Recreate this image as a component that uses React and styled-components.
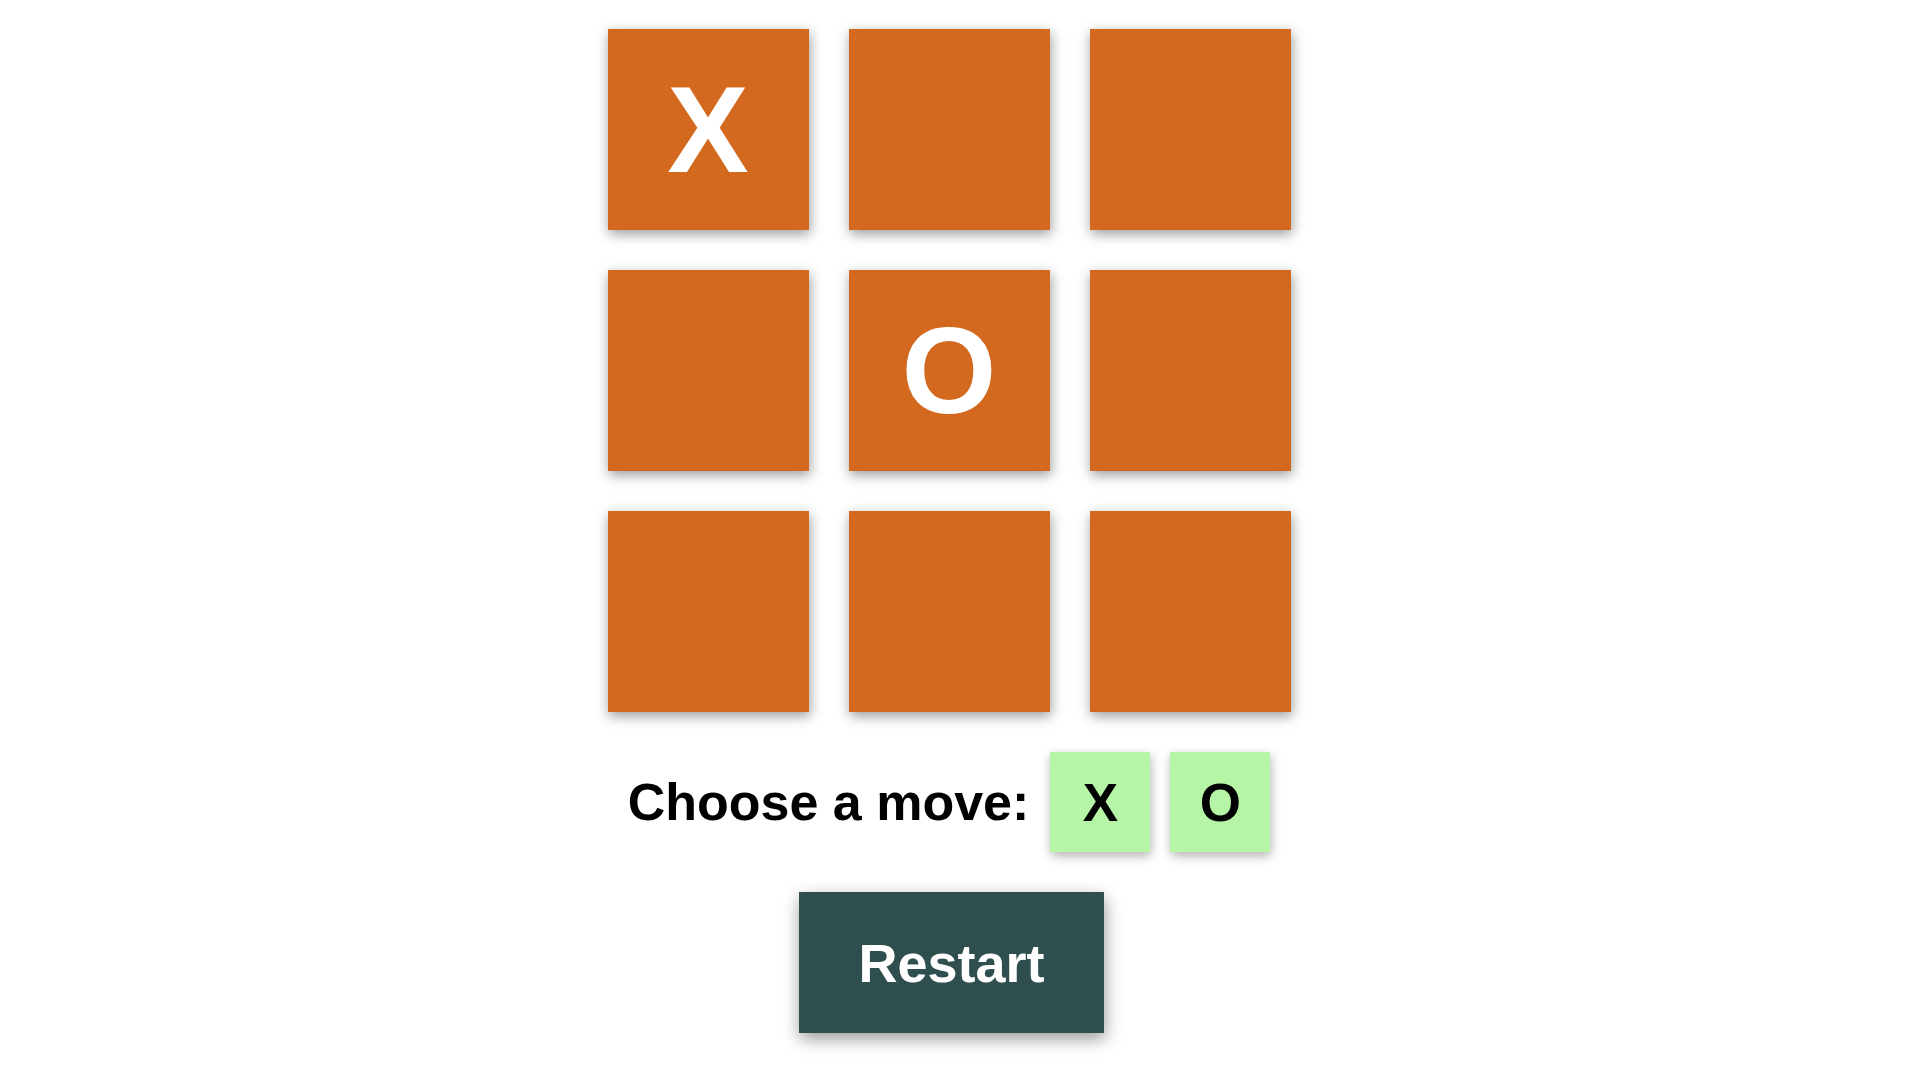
import React, { useState } from 'react';
import styled, { createGlobalStyle } from 'styled-components';

const GlobalStyle = createGlobalStyle`
    body {
        margin: 0;
        background: #ffffff;
        font-family: "Liberation Sans", Arial, sans-serif;
    }
`

const Page = styled.div`
    display: flex;
    flex-direction: column;
    align-items: center;
    gap: 40px;
    padding: 29px 22px 40px 0;
`

const Board = styled.div`
    display: grid;
    grid-template-columns: repeat(3, 201px);
    grid-auto-rows: 201px;
    gap: 40px;
`

const Cell = styled.button`
    display: flex;
    align-items: center;
    justify-content: center;
    border: none;
    padding: 0;
    background: #d2691e;
    color: #ffffff;
    font-family: "Liberation Sans", Arial, sans-serif;
    font-weight: bold;
    font-size: 122px;
    line-height: 1;
    box-shadow: 1px 4px 12px rgba(0, 0, 0, 0.4);
    cursor: pointer;
`

const MoveRow = styled.div`
    display: flex;
    align-items: center;
    gap: 20px;
`

const Label = styled.span`
    font-size: 52px;
    font-weight: bold;
    color: #000;
    margin-right: 1px;
`

const MoveButton = styled.button`
    width: 100px;
    height: 100px;
    border: none;
    padding: 0;
    background: ${p => (p.active ? '#9be88a' : '#b5f5a5')};
    color: #000;
    font-family: "Liberation Sans", Arial, sans-serif;
    font-weight: bold;
    font-size: 53px;
    box-shadow: 1px 4px 10px rgba(0, 0, 0, 0.3);
    cursor: pointer;
`

const Restart = styled.button`
    width: 305px;
    height: 141px;
    margin-left: 5px;
    border: none;
    background: #2f4f4f;
    color: #ffffff;
    font-family: "Liberation Sans", Arial, sans-serif;
    font-weight: bold;
    font-size: 54px;
    box-shadow: 1px 6px 16px rgba(0, 0, 0, 0.4);
    cursor: pointer;
`

const start = ['X', '', '', '', 'O', '', '', '', '']

export default function App() {
    const [cells, setCells] = useState(start)
    const [move, setMove] = useState('X')

    const play = i => {
        if (cells[i]) return
        const next = cells.slice()
        next[i] = move
        setCells(next)
    }

    return (
        <Page>
            <GlobalStyle />
            <Board>
                {cells.map((c, i) => (
                    <Cell key={i} onClick={() => play(i)}>{c}</Cell>
                ))}
            </Board>
            <MoveRow>
                <Label>Choose a move:</Label>
                <MoveButton onClick={() => setMove('X')}>X</MoveButton>
                <MoveButton onClick={() => setMove('O')}>O</MoveButton>
            </MoveRow>
            <Restart onClick={() => setCells(Array(9).fill(''))}>Restart</Restart>
        </Page>
    )
}
